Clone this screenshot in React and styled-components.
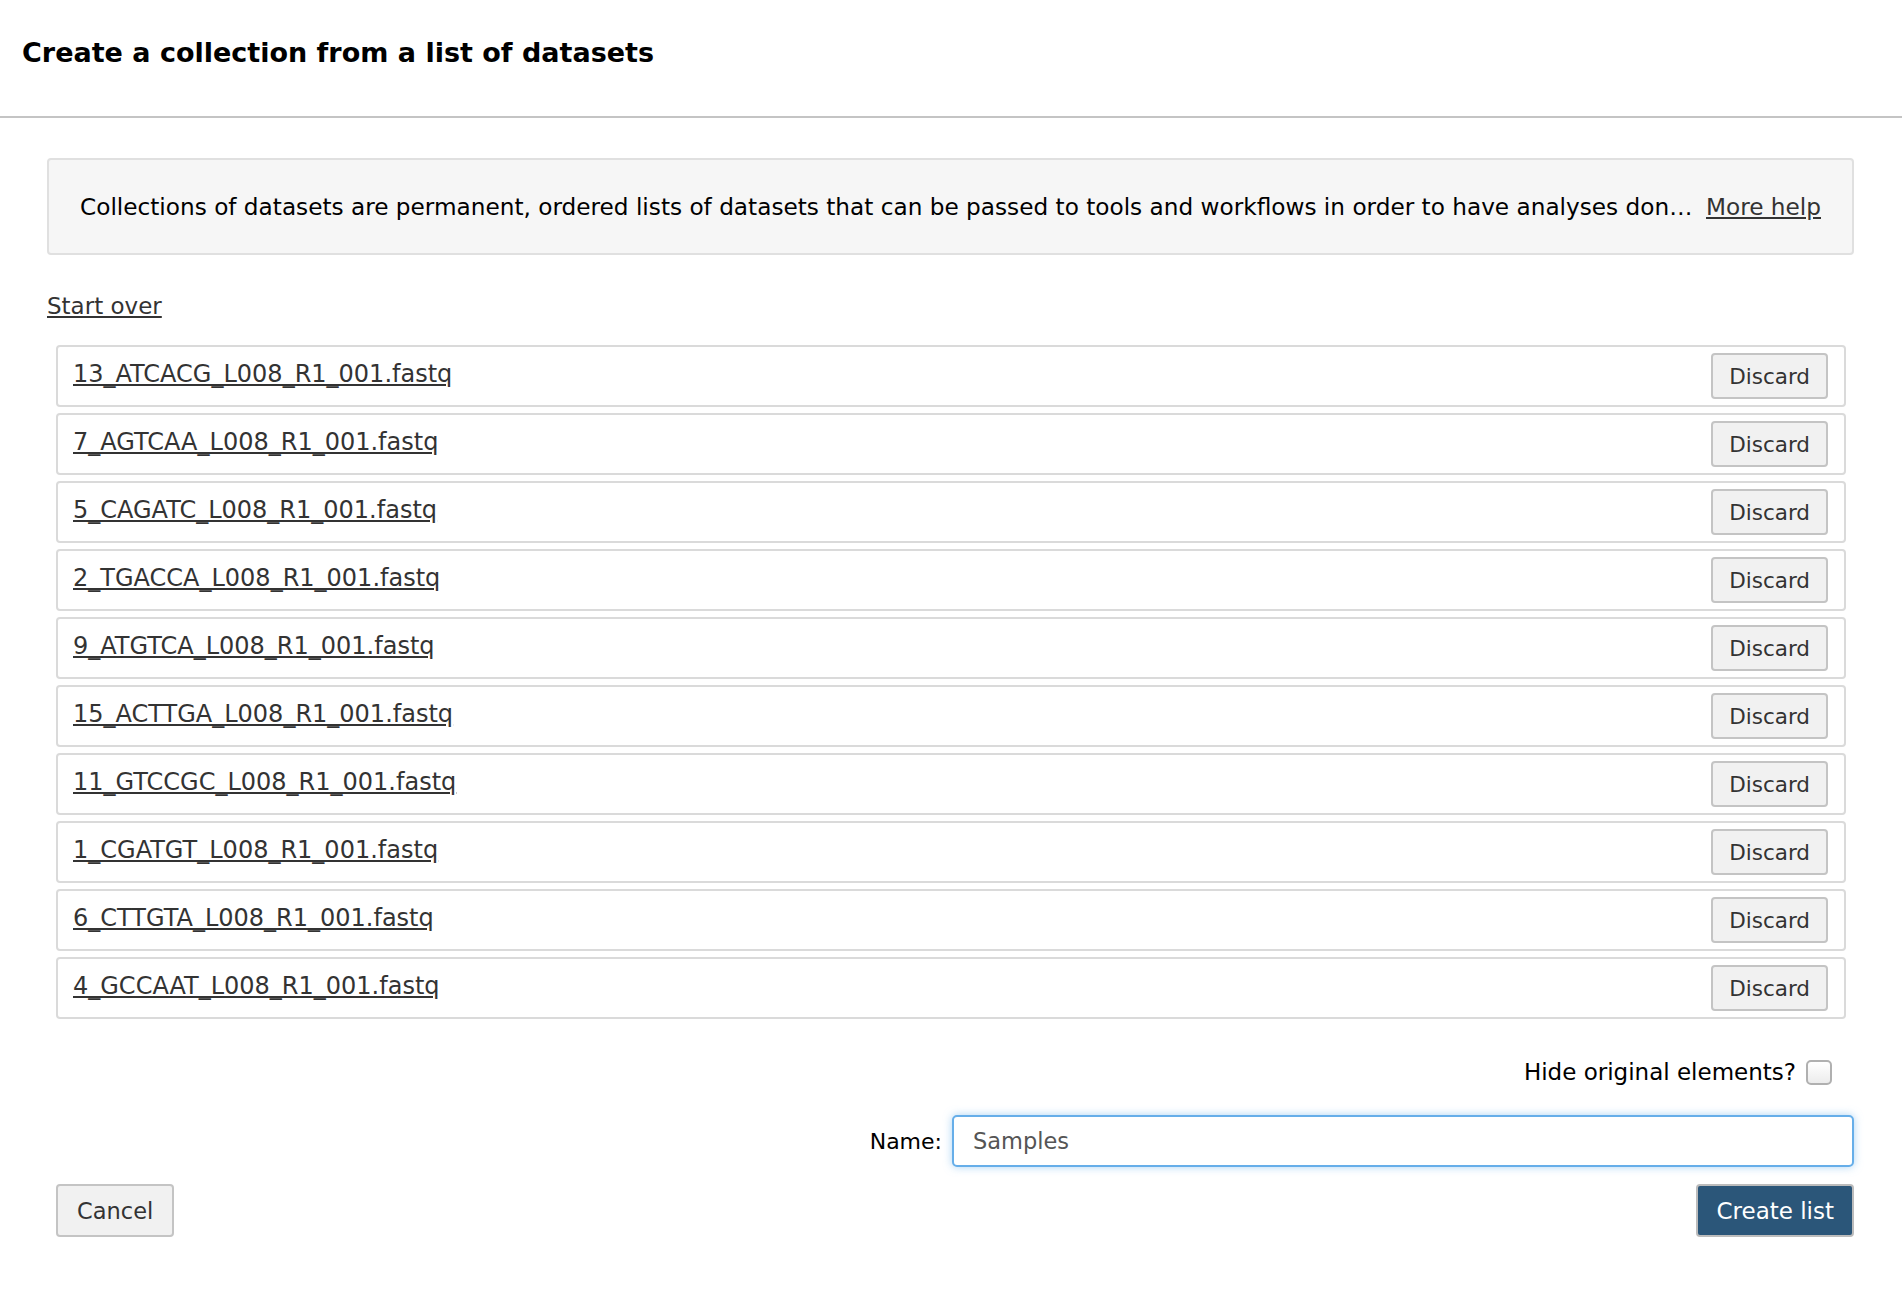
import React from 'react';
import styled, { createGlobalStyle } from 'styled-components';

const datasets = [
  '13_ATCACG_L008_R1_001.fastq',
  '7_AGTCAA_L008_R1_001.fastq',
  '5_CAGATC_L008_R1_001.fastq',
  '2_TGACCA_L008_R1_001.fastq',
  '9_ATGTCA_L008_R1_001.fastq',
  '15_ACTTGA_L008_R1_001.fastq',
  '11_GTCCGC_L008_R1_001.fastq',
  '1_CGATGT_L008_R1_001.fastq',
  '6_CTTGTA_L008_R1_001.fastq',
  '4_GCCAAT_L008_R1_001.fastq',
];

const GlobalStyle = createGlobalStyle`
  body {
    margin: 0;
    background: #fff;
    font-family: "DejaVu Sans", "Open Sans", sans-serif;
    color: #000;
  }
`;

const App = () => {
  return (
    <>
      <GlobalStyle />
      <Header>
        <Title>Create a collection from a list of datasets</Title>
      </Header>
      <Body>
        <HelpBox>
          <HelpText>
            Collections of datasets are permanent, ordered lists of datasets that can be passed to tools and workflows in order to have analyses done on each member of the entire group.
          </HelpText>
          <Link href="#">More help</Link>
        </HelpBox>
        <StartOver href="#">Start over</StartOver>
        <List>
          {datasets.map((name) => (
            <Row key={name}>
              <RowName href="#">{name}</RowName>
              <Button>Discard</Button>
            </Row>
          ))}
        </List>
        <HideRow>
          <span>Hide original elements?</span>
          <Checkbox type="checkbox" />
        </HideRow>
        <NameRow>
          <label htmlFor="name">Name:</label>
          <NameInput id="name" defaultValue="Samples" />
        </NameRow>
        <Actions>
          <Button $big>Cancel</Button>
          <PrimaryButton>Create list</PrimaryButton>
        </Actions>
      </Body>
    </>
  );
};

export default App;

const Header = styled.div`
  height: 118px;
  display: flex;
  align-items: center;
  padding: 0 22px 11px;
  box-sizing: border-box;
  border-bottom: 2px solid #c4c4c4;
`;

const Title = styled.h1`
  margin: 0;
  font-size: 27px;
  font-weight: bold;
  color: #000;
`;

const Body = styled.div`
  padding: 40px 48px 0 47px;
  font-size: 24px;
`;

const HelpBox = styled.div`
  height: 97px;
  box-sizing: border-box;
  display: flex;
  align-items: center;
  gap: 12px;
  padding: 0 31px 0 31px;
  background: #f6f6f6;
  border: 2px solid #e0e0e0;
  border-radius: 4px;
  font-size: 23.2px;
`;

const HelpText = styled.div`
  flex: 1;
  min-width: 0;
  white-space: nowrap;
  overflow: hidden;
  text-overflow: ellipsis;
`;

const Link = styled.a`
  color: #333;
  text-decoration: underline;
  white-space: nowrap;
`;

const StartOver = styled(Link)`
  display: block;
  width: max-content;
  margin-top: 36px;
  line-height: 30px;
  font-size: 23px;
`;

const List = styled.div`
  display: flex;
  flex-direction: column;
  gap: 6px;
  margin: 24px 8px 0 9px;
`;

const Row = styled.div`
  height: 62px;
  box-sizing: border-box;
  display: flex;
  align-items: center;
  justify-content: space-between;
  padding: 0 16px 0 15px;
  border: 2px solid #dadada;
  border-radius: 4px;
`;

const RowName = styled(Link)`
  margin-top: -4px;
`;

const Button = styled.button`
  height: ${(p) => (p.$big ? '53px' : '46px')};
  padding: 0 ${(p) => (p.$big ? '19px' : '16px')};
  margin-left: ${(p) => (p.$big ? '9px' : '0')};
  background: #f1f1f1;
  border: 2px solid #c4c4c4;
  border-radius: 4px;
  font-family: inherit;
  font-size: ${(p) => (p.$big ? '22.5px' : '21.5px')};
  color: #333;
`;

const PrimaryButton = styled.button`
  height: 53px;
  padding: 0 18px;
  background: #2b5679;
  border: 2px solid #bcbcbc;
  border-radius: 4px;
  font-family: inherit;
  font-size: 23px;
  color: #fff;
`;

const HideRow = styled.div`
  display: flex;
  justify-content: flex-end;
  align-items: center;
  gap: 10px;
  margin-top: 40px;
  padding-right: 22px;
  font-size: 23px;
`;

const Checkbox = styled.input`
  appearance: none;
  margin: 0;
  width: 26px;
  height: 25px;
  border: 2px solid #b0b0b0;
  border-radius: 5px;
  background: linear-gradient(#ffffff, #ececec);
`;

const NameRow = styled.div`
  display: flex;
  justify-content: flex-end;
  align-items: center;
  gap: 10px;
  margin-top: 30px;
  font-size: 22px;
`;

const NameInput = styled.input`
  width: 902px;
  height: 52px;
  box-sizing: border-box;
  padding: 0 19px;
  border: 2px solid #66aee9;
  border-radius: 5px;
  box-shadow: 0 0 8px rgba(102, 175, 233, 0.55);
  outline: none;
  font-family: inherit;
  font-size: 22.5px;
  color: #555;
`;

const Actions = styled.div`
  display: flex;
  justify-content: space-between;
  align-items: center;
  margin-top: 17px;
`;
